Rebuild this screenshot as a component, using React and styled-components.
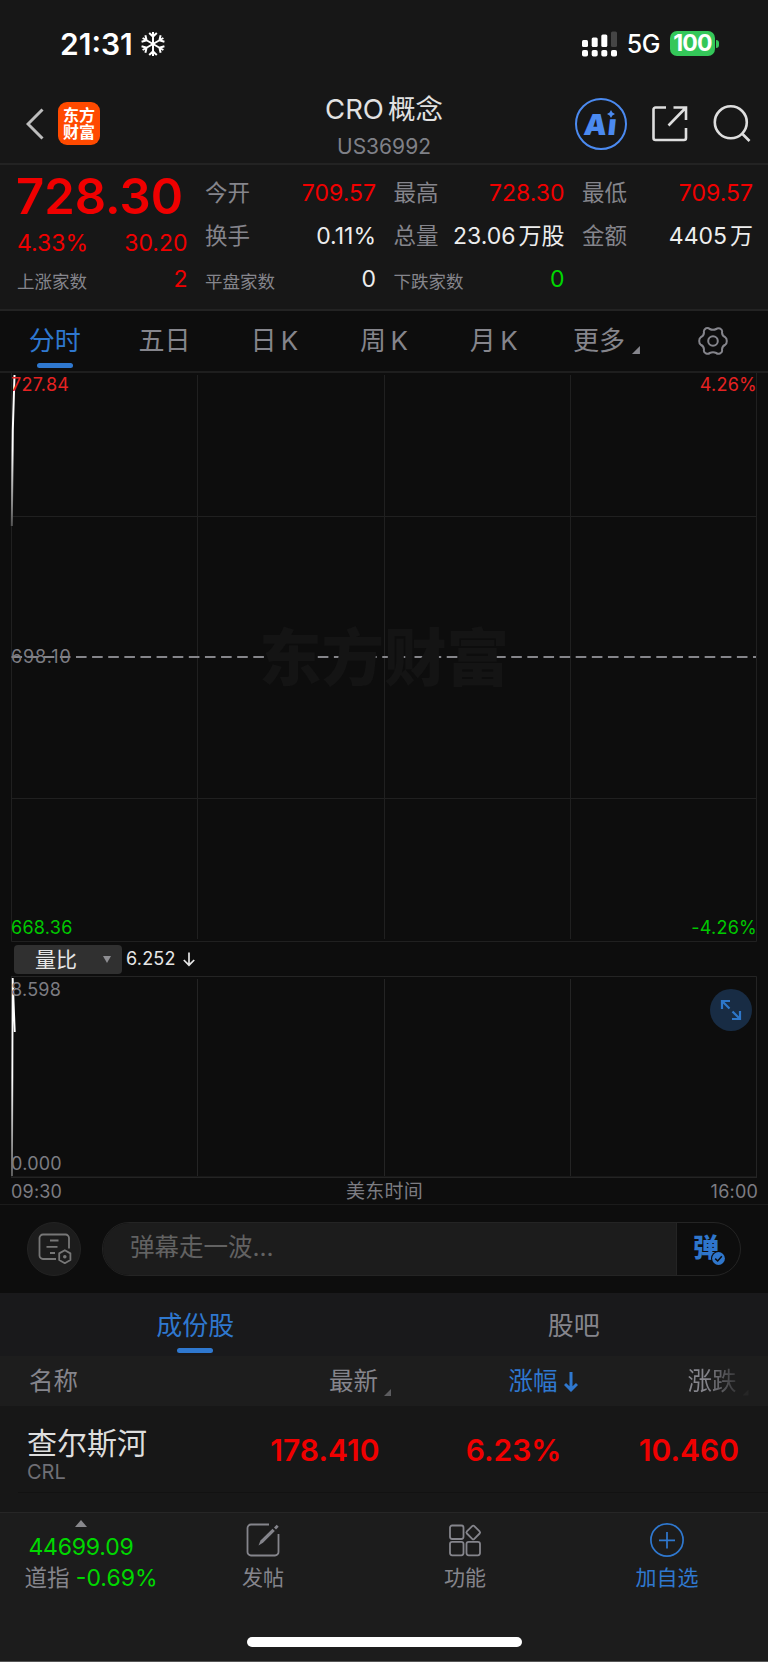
import styled, { createGlobalStyle } from "styled-components";

const quoteCells = [
  { label: "今开", value: "709.57", color: "#f00000" },
  { label: "最高", value: "728.30", color: "#f00000" },
  { label: "最低", value: "709.57", color: "#f00000" },
  { label: "换手", value: "0.11%", color: "#ededed" },
  { label: "总量", value: "23.06", unit: "万股", color: "#ededed" },
  { label: "金额", value: "4405", unit: "万", color: "#ededed" },
  { label: "平盘家数", value: "0", color: "#ededed", small: true },
  { label: "下跌家数", value: "0", color: "#00d800", small: true },
];

const periods = ["分时", "五日", "日 K", "周 K", "月 K"];

const StatusBar = () => (
  <StatusRow>
    <Clock>
      21:31
      <svg width="24" height="26" viewBox="-12 -13 24 26" fill="none" stroke="#fff" strokeWidth="2">
        {[0, 60, 120, 180, 240, 300].map((a) => (
          <path key={a} d="M0 0V-12M-3.8 -11L0 -7.4L3.8 -11" transform={`rotate(${a})`} />
        ))}
      </svg>
    </Clock>
    <StatusRight>
      <svg width="36" height="26" viewBox="0 0 36 26" fill="#fff">
        <rect x="0" y="9" width="6" height="7" rx="1.5" />
        <rect x="9.7" y="6.5" width="6" height="9.5" rx="1.5" />
        <rect x="19.3" y="3.5" width="6" height="12.5" rx="1.5" />
        <rect x="29" y="0.5" width="6" height="15.5" rx="1.5" fill="#454545" />
        <rect x="0" y="19" width="6" height="6.5" rx="1.8" />
        <rect x="9.7" y="19" width="6" height="6.5" rx="1.8" />
        <rect x="19.3" y="19" width="6" height="6.5" rx="1.8" />
        <rect x="29" y="19" width="6" height="6.5" rx="1.8" />
      </svg>
      <Network>5G</Network>
      <Battery>100</Battery>
      <BatteryCap />
    </StatusRight>
  </StatusRow>
);

const NavBar = () => (
  <Nav>
    <NavSide>
      <svg width="18" height="34" viewBox="0 0 18 34" fill="none" stroke="#bdbdbd" strokeWidth="3">
        <path d="M16.5 2.5L2 17L16.5 31.5" />
      </svg>
      <AppLogo>
        <span>东方</span>
        <span>财富</span>
      </AppLogo>
    </NavSide>
    <NavTitle>
      <Title>
        CRO<i>概念</i>
      </Title>
      <Code>US36992</Code>
    </NavTitle>
    <NavActions>
      <AiBadge>
        <span>Aı</span>
        <AiStar viewBox="-4 -4 8 8">
          <path d="M0 -4L1.4 -1.4L4 0L1.4 1.4L0 4L-1.4 1.4L-4 0L-1.4 -1.4Z" fill="#4b8af0" />
        </AiStar>
      </AiBadge>
      <svg width="38" height="38" viewBox="0 0 38 38" fill="none" stroke="#dedede" strokeWidth="2.6">
        <path d="M15 2.5H4.5a2 2 0 0 0-2 2V33a2 2 0 0 0 2 2H33a2 2 0 0 0 2-2V23" />
        <path d="M22.5 2.5H35V15M35 2.5L17.5 20.5" />
      </svg>
      <svg width="38" height="38" viewBox="0 0 38 38" fill="none" stroke="#dedede" strokeWidth="2.6">
        <circle cx="17.8" cy="17.3" r="16" />
        <path d="M29 28.5L36.5 36" />
      </svg>
    </NavActions>
  </Nav>
);

const Quote = () => (
  <QuotePanel>
    <QuoteMain>
      <LastPrice>728.30</LastPrice>
      <ChangeRow>
        <span>4.33%</span>
        <span>30.20</span>
      </ChangeRow>
      <QuoteCell $color="#f00000">
        <CellLabel $small>上涨家数</CellLabel>
        <CellValue>2</CellValue>
      </QuoteCell>
    </QuoteMain>
    <QuoteGrid>
      {quoteCells.map((c) => (
        <QuoteCell key={c.label} $color={c.color}>
          <CellLabel $small={c.small}>{c.label}</CellLabel>
          <CellValue>
            {c.value}
            {c.unit && <Unit>{c.unit}</Unit>}
          </CellValue>
        </QuoteCell>
      ))}
    </QuoteGrid>
  </QuotePanel>
);

const Periods = () => (
  <PeriodBar>
    {periods.map((p, i) => (
      <Period key={p} $active={i === 0}>
        {p}
      </Period>
    ))}
    <Period>
      <MoreLabel>
        更多
        <Corner $size={8} />
      </MoreLabel>
    </Period>
    <Period>
      <svg width="30" height="30" viewBox="-15 -15 30 30" fill="none" stroke="#85858c" strokeWidth="2">
        <path
          strokeLinejoin="round"
          d="M-7 -12.8Q-4.5 -13.4 -3.3 -12Q0 -10.3 3.3 -12Q4.5 -13.4 7 -12.5L8.6 -11.3Q9.5 -9.8 9 -8.3Q9.3 -4.8 12.3 -3.7Q13.8 -2.8 13.8 0Q13.8 2.8 12.3 3.7Q9.3 4.8 9 8.3Q9.5 9.8 8.6 11.3L7 12.5Q4.5 13.4 3.3 12Q0 10.3 -3.3 12Q-4.5 13.4 -7 12.5L-8.6 11.3Q-9.5 9.8 -9 8.3Q-9.3 4.8 -12.3 3.7Q-13.8 2.8 -13.8 0Q-13.8 -2.8 -12.3 -3.7Q-9.3 -4.8 -9 -8.3Q-9.5 -9.8 -8.6 -11.3Z"
        />
        <circle r="4.8" />
      </svg>
    </Period>
  </PeriodBar>
);

const PriceChart = () => (
  <ChartBox $height={569}>
    <Watermark>东方财富</Watermark>
    <svg width="768" height="569" viewBox="0 373 768 569" fill="none">
      <defs>
        <linearGradient id="priceFade" x1="0" y1="375" x2="0" y2="526" gradientUnits="userSpaceOnUse">
          <stop offset="0.5" stopColor="#fff" />
          <stop offset="1" stopColor="#555" />
        </linearGradient>
      </defs>
      <g stroke="#202020">
        <path d="M11.5 373V941.5H756.5V373M11 516.5H756M11 798.5H756" />
        <path d="M197.5 375V939M384.5 375V939M570.5 375V939" />
      </g>
      <path d="M11.5 657H756" stroke="#85858a" strokeWidth="2" strokeDasharray="10.6 5.52" />
      <path d="M14.5 375L12.8 430L11.8 526" stroke="url(#priceFade)" strokeWidth="2" />
    </svg>
    <ChartLabel $top={3} $color="#e62222">727.84</ChartLabel>
    <ChartLabel $top={3} $color="#e62222" $right>4.26%</ChartLabel>
    <ChartLabel $top={275} $color="#7c7c82" $spacing={0.9}>698.10</ChartLabel>
    <ChartLabel $top={546} $color="#00c800">668.36</ChartLabel>
    <ChartLabel $top={546} $color="#00c800" $right>-4.26%</ChartLabel>
  </ChartBox>
);

const Indicator = () => (
  <IndicatorRow>
    <IndicatorSelect>
      <span>量比</span>
      <svg width="8" height="7" viewBox="0 0 8 7">
        <path d="M0 0H8L4 7Z" fill="#8e8e92" />
      </svg>
    </IndicatorSelect>
    6.252
    <svg width="12" height="15" viewBox="0 0 12 15" fill="none" stroke="#e6e6e6" strokeWidth="1.7">
      <path d="M6 0.5V13M0.8 8L6 13.2L11.2 8" />
    </svg>
  </IndicatorRow>
);

const VolumeChart = () => (
  <ChartBox $height={202}>
    <svg width="768" height="202" viewBox="0 976 768 202" fill="none">
      <defs>
        <linearGradient id="ratioFade" x1="0" y1="978" x2="0" y2="1176" gradientUnits="userSpaceOnUse">
          <stop offset="0.5" stopColor="#fff" />
          <stop offset="1" stopColor="#666" />
        </linearGradient>
      </defs>
      <g stroke="#242424">
        <path d="M11 976.5H756.5V1177M11.5 976V1177" />
        <path d="M197.5 979V1176M384.5 979V1176M570.5 979V1176" />
        <path d="M11 1177.2H757" strokeWidth="1.5" />
      </g>
      <path d="M12 1176L12.7 978L14.8 1032" stroke="url(#ratioFade)" strokeWidth="1.8" />
    </svg>
    <ChartLabel $top={5} $color="#7c7c82">8.598</ChartLabel>
    <ChartLabel $top={179} $color="#7c7c82">0.000</ChartLabel>
    <ExpandButton>
      <svg width="22" height="22" viewBox="0 0 22 22" fill="none" stroke="#2d76c8" strokeWidth="2.2">
        <path d="M2 10V2H10M2 2L9.5 9.5M20 12V20H12M20 20L12.5 12.5" />
      </svg>
    </ExpandButton>
  </ChartBox>
);

const Danmu = () => (
  <DanmuBar>
    <DanmuSettings>
      <svg width="34" height="32" viewBox="0 0 34 32" fill="none" stroke="#777" strokeWidth="1.8">
        <path d="M18 26H5a3.5 3.5 0 0 1-3.5-3.5V5A3.5 3.5 0 0 1 5 1.5H27.5A3.5 3.5 0 0 1 31 5V15.5" />
        <path d="M12 7.5H20.5M8.5 13.8H19.5M12 20H17" />
        <path d="M26.8 17.2L32.4 20.4V27L26.8 30.2L21.2 27V20.4Z" strokeLinejoin="round" />
        <circle cx="26.8" cy="23.7" r="1.8" fill="#777" stroke="none" />
      </svg>
    </DanmuSettings>
    <DanmuInput>
      <Placeholder>弹幕走一波...</Placeholder>
      <DanmuToggle>
        弹
        <CheckMark viewBox="0 0 15 15">
          <circle cx="7.5" cy="7.5" r="7.5" fill="#0d0d0d" />
          <circle cx="7.5" cy="7.5" r="6.4" fill="#2f76cb" />
          <path d="M4.2 7.6L6.7 10L10.8 5.3" fill="none" stroke="#0d0d0d" strokeWidth="1.5" />
        </CheckMark>
      </DanmuToggle>
    </DanmuInput>
  </DanmuBar>
);

const Stocks = () => (
  <>
    <ListTabs>
      <ListTab $active>成份股</ListTab>
      <ListTab>股吧</ListTab>
    </ListTabs>
    <ListHead>
      <HeadCell>名称</HeadCell>
      <HeadCell>
        最新
        <Corner $size={7} $dim />
      </HeadCell>
      <HeadCell $active>
        涨幅
        <svg width="14" height="20" viewBox="0 0 14 20" fill="none" stroke="#2f78cf" strokeWidth="3">
          <path d="M7 0V17.5M1 12L7 17.8L13 12" />
        </svg>
      </HeadCell>
      <HeadCell $fade>
        涨跌
        <Corner $size={6} $dim />
      </HeadCell>
    </ListHead>
    <StockRow>
      <StockName>
        <b>查尔斯河</b>
        <span>CRL</span>
      </StockName>
      <StockValue>178.410</StockValue>
      <StockValue>6.23%</StockValue>
      <StockValue>10.460</StockValue>
    </StockRow>
  </>
);

const BottomBar = () => (
  <Footer>
    <FooterRow>
      <IndexBox>
        <svg width="12" height="7" viewBox="0 0 12 7">
          <path d="M0 7L6 0L12 7Z" fill="#88888c" />
        </svg>
        <IndexValue>44699.09</IndexValue>
        <IndexChange>
          道指 <em>-0.69%</em>
        </IndexChange>
      </IndexBox>
      <FooterItem>
        <svg width="34" height="34" viewBox="0 0 34 34" fill="none" stroke="#85858c" strokeWidth="1.8">
          <path d="M23 1.5H5A3.5 3.5 0 0 0 1.5 5V29A3.5 3.5 0 0 0 5 32.5H29A3.5 3.5 0 0 0 32.5 29V11" />
          <path d="M12.5 22.5L14.5 17.5L26.5 5.8L28.8 8.1L17 19.8Z" fill="#85858c" stroke="none" />
          <path d="M28 4.5L30.7 1.8L32.7 3.8L30 6.5Z" fill="#85858c" stroke="none" />
        </svg>
        发帖
      </FooterItem>
      <FooterItem>
        <svg width="34" height="34" viewBox="0 0 34 34" fill="none" stroke="#85858c" strokeWidth="1.8">
          <rect x="2" y="2.5" width="13.5" height="13.5" rx="2.2" />
          <rect x="2" y="18.8" width="13.5" height="13.5" rx="2.2" />
          <rect x="18.5" y="18.8" width="13.5" height="13.5" rx="2.2" />
          <rect x="20" y="4.2" width="10.5" height="10.5" rx="1.5" transform="rotate(45 25.25 9.45)" />
        </svg>
        功能
      </FooterItem>
      <FooterItem $active>
        <svg width="34" height="34" viewBox="0 0 34 34" fill="none" stroke="#2f78cf" strokeWidth="1.7">
          <circle cx="17" cy="17" r="16.1" />
          <path d="M17 9V25.5M9 17.3H25" />
        </svg>
        加自选
      </FooterItem>
    </FooterRow>
    <HomeIndicator />
  </Footer>
);

const App = () => (
  <>
    <GlobalStyle />
    <Screen>
      <StatusBar />
      <NavBar />
      <Quote />
      <Periods />
      <PriceChart />
      <Indicator />
      <VolumeChart />
      <TimeAxis>
        <span>09:30</span>
        <span>美东时间</span>
        <span>16:00</span>
      </TimeAxis>
      <Danmu />
      <Stocks />
      <BottomBar />
    </Screen>
  </>
);

export default App;

const GlobalStyle = createGlobalStyle`
  * {
    box-sizing: border-box;
  }

  body {
    margin: 0;
    background: #171717;
    font-family: Inter, "Noto Sans CJK SC", sans-serif;
    line-height: 1;
  }

  svg {
    display: block;
    flex-shrink: 0;
  }
`;

const Screen = styled.div`
  width: 768px;
  height: 1662px;
  display: flex;
  flex-direction: column;
  overflow: hidden;
  background: #171717;
  white-space: nowrap;
`;

const StatusRow = styled.div`
  height: 87px;
  padding: 0 49px 0 60px;
  display: flex;
  justify-content: space-between;
  color: #fff;
`;

const Clock = styled.div`
  height: 87px;
  display: flex;
  align-items: center;
  gap: 8px;
  font-size: 30px;
  font-weight: 600;
`;

const StatusRight = styled.div`
  height: 87px;
  display: flex;
  align-items: center;
`;

const Network = styled.span`
  margin: 2px 10px 0 9px;
  font-size: 25px;
  font-weight: 500;
  letter-spacing: -0.5px;
`;

const Battery = styled.div`
  width: 45px;
  height: 25px;
  border-radius: 7px;
  background: #34c759;
  display: flex;
  align-items: center;
  justify-content: center;
  font-size: 23px;
  font-weight: 700;
  letter-spacing: -0.8px;
`;

const BatteryCap = styled.div`
  width: 3px;
  height: 8px;
  margin-left: 1px;
  border-radius: 0 3px 3px 0;
  background: #34c759;
`;

const Nav = styled.div`
  height: 78px;
  padding: 0 17px 0 26px;
  display: grid;
  grid-template-columns: 268px 180px 1fr;
  border-bottom: 2px solid #232323;
`;

const NavSide = styled.div`
  display: flex;
  align-items: center;
  gap: 14px;
  padding-bottom: 3px;
`;

const AppLogo = styled.div`
  width: 42px;
  height: 43px;
  border-radius: 9px;
  background: #ff4a00;
  color: #fff;
  display: flex;
  flex-direction: column;
  align-items: center;
  justify-content: center;
  gap: 1px;
  font-size: 16px;
  font-weight: 700;
`;

const NavTitle = styled.div`
  display: flex;
  flex-direction: column;
  align-items: center;
  padding-top: 8px;
`;

const Title = styled.div`
  font-size: 27.5px;
  line-height: 28px;
  color: #e2e2e2;

  i {
    margin-left: 4px;
    font-style: normal;
  }
`;

const Code = styled.div`
  margin-top: 13px;
  font-size: 21px;
  color: #7f8087;
`;

const NavActions = styled.div`
  display: flex;
  align-items: center;
  justify-content: flex-end;
  gap: 24px;
  padding-bottom: 2px;
`;

const AiBadge = styled.div`
  position: relative;
  width: 52px;
  height: 52px;
  border: 2.5px solid #4b8af0;
  border-radius: 50%;
  display: flex;
  align-items: center;
  justify-content: center;
  color: #4b8af0;
  font-size: 29px;
  font-weight: 900;

  span {
    letter-spacing: 1px;
    transform: skewX(-6deg);
  }
`;

const AiStar = styled.svg`
  position: absolute;
  left: 30px;
  top: 10px;
  width: 8px;
  height: 8px;
  background: #171717;
`;

const QuotePanel = styled.div`
  height: 146px;
  padding: 7px 14px 0 17px;
  display: grid;
  grid-template-columns: 170.5px 1fr;
  column-gap: 17.5px;
  border-bottom: 2px solid #232323;
`;

const QuoteMain = styled.div`
  display: grid;
  grid-template-rows: 50px 43px 29px;
  align-content: start;
  color: #f00000;
`;

const LastPrice = styled.div`
  margin-left: -1px;
  font-size: 49px;
  line-height: 49px;
  font-weight: 600;
`;

const ChangeRow = styled.div`
  display: flex;
  justify-content: space-between;
  align-items: center;
  font-size: 23px;
`;

const QuoteGrid = styled.div`
  display: grid;
  grid-template-columns: repeat(3, 171px);
  grid-template-rows: 43px 43px 43px;
  column-gap: 17.5px;
`;

const QuoteCell = styled.div`
  display: flex;
  justify-content: space-between;
  align-items: center;
  color: ${(p) => p.$color};
`;

const CellLabel = styled.span`
  color: #85858c;
  font-size: ${(p) => (p.$small ? 17.5 : 22.5)}px;
  padding-top: ${(p) => (p.$small ? 4 : 0)}px;
`;

const CellValue = styled.span`
  font-size: 23px;
`;

const Unit = styled.span`
  margin-left: 3px;
`;

const PeriodBar = styled.div`
  height: 62px;
  display: flex;
  background: #0d0d0d;
  border-bottom: 2px solid #1e1e1e;
`;

const Period = styled.div`
  flex: 1;
  display: flex;
  align-items: center;
  justify-content: center;
  position: relative;
  font-size: 26px;
  word-spacing: -3px;
  color: ${(p) => (p.$active ? "#2f78cf" : "#85858c")};

  &::after {
    content: "";
    display: ${(p) => (p.$active ? "block" : "none")};
    position: absolute;
    bottom: 3px;
    width: 36px;
    height: 5.5px;
    border-radius: 3px;
    background: #2f78cf;
  }
`;

const MoreLabel = styled.span`
  display: flex;
  align-items: flex-end;
  gap: 7px;
  padding-left: 6px;
`;

const Corner = styled.span`
  width: ${(p) => p.$size}px;
  height: ${(p) => p.$size}px;
  background: ${(p) => (p.$dim ? "#5c5c5f" : "#85858c")};
  clip-path: polygon(100% 0, 100% 100%, 0 100%);
`;

const ChartBox = styled.div`
  position: relative;
  height: ${(p) => p.$height}px;
  background: #0d0d0d;
`;

const Watermark = styled.div`
  position: absolute;
  top: 254px;
  left: 0;
  width: 100%;
  text-align: center;
  font-size: 62.5px;
  font-weight: 900;
  color: #141414;
`;

const ChartLabel = styled.span`
  position: absolute;
  top: ${(p) => p.$top}px;
  ${(p) => (p.$right ? "right: 11px;" : "left: 11px;")}
  font-size: 18px;
  letter-spacing: ${(p) => p.$spacing || 0.25}px;
  color: ${(p) => p.$color};
`;

const IndicatorRow = styled.div`
  height: 34px;
  padding-left: 14px;
  display: flex;
  align-items: center;
  background: #0d0d0d;
  color: #e6e6e6;
  font-size: 18px;
  letter-spacing: 0.2px;

  > svg {
    margin-left: 7px;
  }
`;

const IndicatorSelect = styled.div`
  width: 108px;
  height: 29px;
  margin-right: 4px;
  padding: 0 11px 0 21px;
  display: flex;
  align-items: center;
  justify-content: space-between;
  border-radius: 4px;
  background: #303030;
  font-size: 21px;
  letter-spacing: 0;
`;

const ExpandButton = styled.div`
  position: absolute;
  right: 16px;
  top: 13px;
  width: 42px;
  height: 42px;
  border-radius: 50%;
  background: #182c44;
  display: flex;
  align-items: center;
  justify-content: center;
`;

const TimeAxis = styled.div`
  height: 27px;
  padding: 1px 10px 0 11px;
  display: grid;
  grid-template-columns: 1fr auto 1fr;
  align-items: center;
  background: #0d0d0d;
  border-bottom: 1px solid #1b1b1b;
  font-size: 18px;
  letter-spacing: 0.2px;
  color: #7c7c82;

  span:nth-child(2) {
    font-size: 19px;
  }

  span:last-child {
    text-align: right;
  }
`;

const DanmuBar = styled.div`
  height: 88px;
  padding: 17px 27px 0;
  display: flex;
  gap: 21px;
  background: #0d0d0d;
`;

const DanmuSettings = styled.div`
  width: 54px;
  height: 54px;
  border: 1px solid #232323;
  border-radius: 50%;
  background: #1c1c1c;
  display: flex;
  align-items: center;
  justify-content: center;
  padding-left: 1px;
`;

const DanmuInput = styled.div`
  flex: 1;
  height: 54px;
  display: flex;
  border: 1px solid #242424;
  border-radius: 27px;
  overflow: hidden;
`;

const Placeholder = styled.div`
  flex: 1;
  padding: 12px 0 0 27px;
  background: #1c1c1c;
  color: #626262;
  font-size: 24.5px;
`;

const DanmuToggle = styled.div`
  position: relative;
  width: 64px;
  padding: 12px 0 0 16px;
  border-left: 1px solid #242424;
  color: #2f76cb;
  font-size: 26px;
  font-weight: 900;
`;

const CheckMark = styled.svg`
  position: absolute;
  left: 34px;
  top: 28px;
  width: 15px;
  height: 15px;
`;

const ListTabs = styled.div`
  height: 63px;
  padding: 0 5px 0 6px;
  display: flex;
  background: #19191b;
`;

const ListTab = styled(Period)`
  padding-top: 3px;
`;

const ListHead = styled.div`
  height: 50px;
  padding: 1px 0 0 29px;
  display: grid;
  grid-template-columns: 300px 179.5px 179px 1fr;
  background: #1d1d1d;
`;

const HeadCell = styled.div`
  display: flex;
  align-items: center;
  gap: 6px;
  font-size: 24.5px;
  color: ${(p) => (p.$active ? "#2f78cf" : "#85858c")};
  ${(p) => p.$fade && "mask-image: linear-gradient(90deg, #000 18px, rgba(0, 0, 0, 0.15) 52px);"}

  ${Corner} {
    margin-top: 22px;
  }
`;

const StockRow = styled.div`
  height: 87px;
  margin-left: 18px;
  padding: 0 29px 0 9px;
  display: grid;
  grid-template-columns: 172.5px 180px 180px 1fr;
  border-bottom: 1px solid #121212;
`;

const StockName = styled.div`
  display: flex;
  flex-direction: column;
  padding-top: 22px;

  b {
    font-size: 30px;
    font-weight: 400;
    color: #dedede;
  }

  span {
    margin-top: 4px;
    font-size: 20px;
    color: #6f6f75;
  }
`;

const StockValue = styled.div`
  padding-top: 29px;
  text-align: right;
  font-size: 30px;
  font-weight: 600;
  color: #f00000;

  &:nth-child(3) {
    margin-right: -2px;
  }
`;

const Footer = styled.div`
  flex: 1;
  margin-top: 19px;
  display: flex;
  flex-direction: column;
  align-items: center;
  background: #1c1c1c;
  border-top: 1px solid #262626;
  border-bottom: 1px solid #555;
`;

const FooterRow = styled.div`
  width: 100%;
  height: 124px;
  display: grid;
  grid-template-columns: 162px repeat(3, 202px);
`;

const IndexBox = styled.div`
  padding-top: 7px;
  display: flex;
  flex-direction: column;
  align-items: center;
`;

const IndexValue = styled.div`
  margin-top: 9px;
  font-size: 23px;
  letter-spacing: -0.2px;
  color: #00d800;
`;

const IndexChange = styled.div`
  margin: 8px 0 0 20px;
  font-size: 22.5px;
  color: #85858c;

  em {
    font-size: 23px;
    font-style: normal;
    color: #00d800;
  }
`;

const FooterItem = styled.div`
  padding-top: 10px;
  display: flex;
  flex-direction: column;
  align-items: center;
  gap: 10px;
  font-size: 21px;
  color: ${(p) => (p.$active ? "#2f78cf" : "#85858c")};
`;

const HomeIndicator = styled.div`
  width: 275px;
  height: 10px;
  border-radius: 5px;
  background: #fff;
`;
